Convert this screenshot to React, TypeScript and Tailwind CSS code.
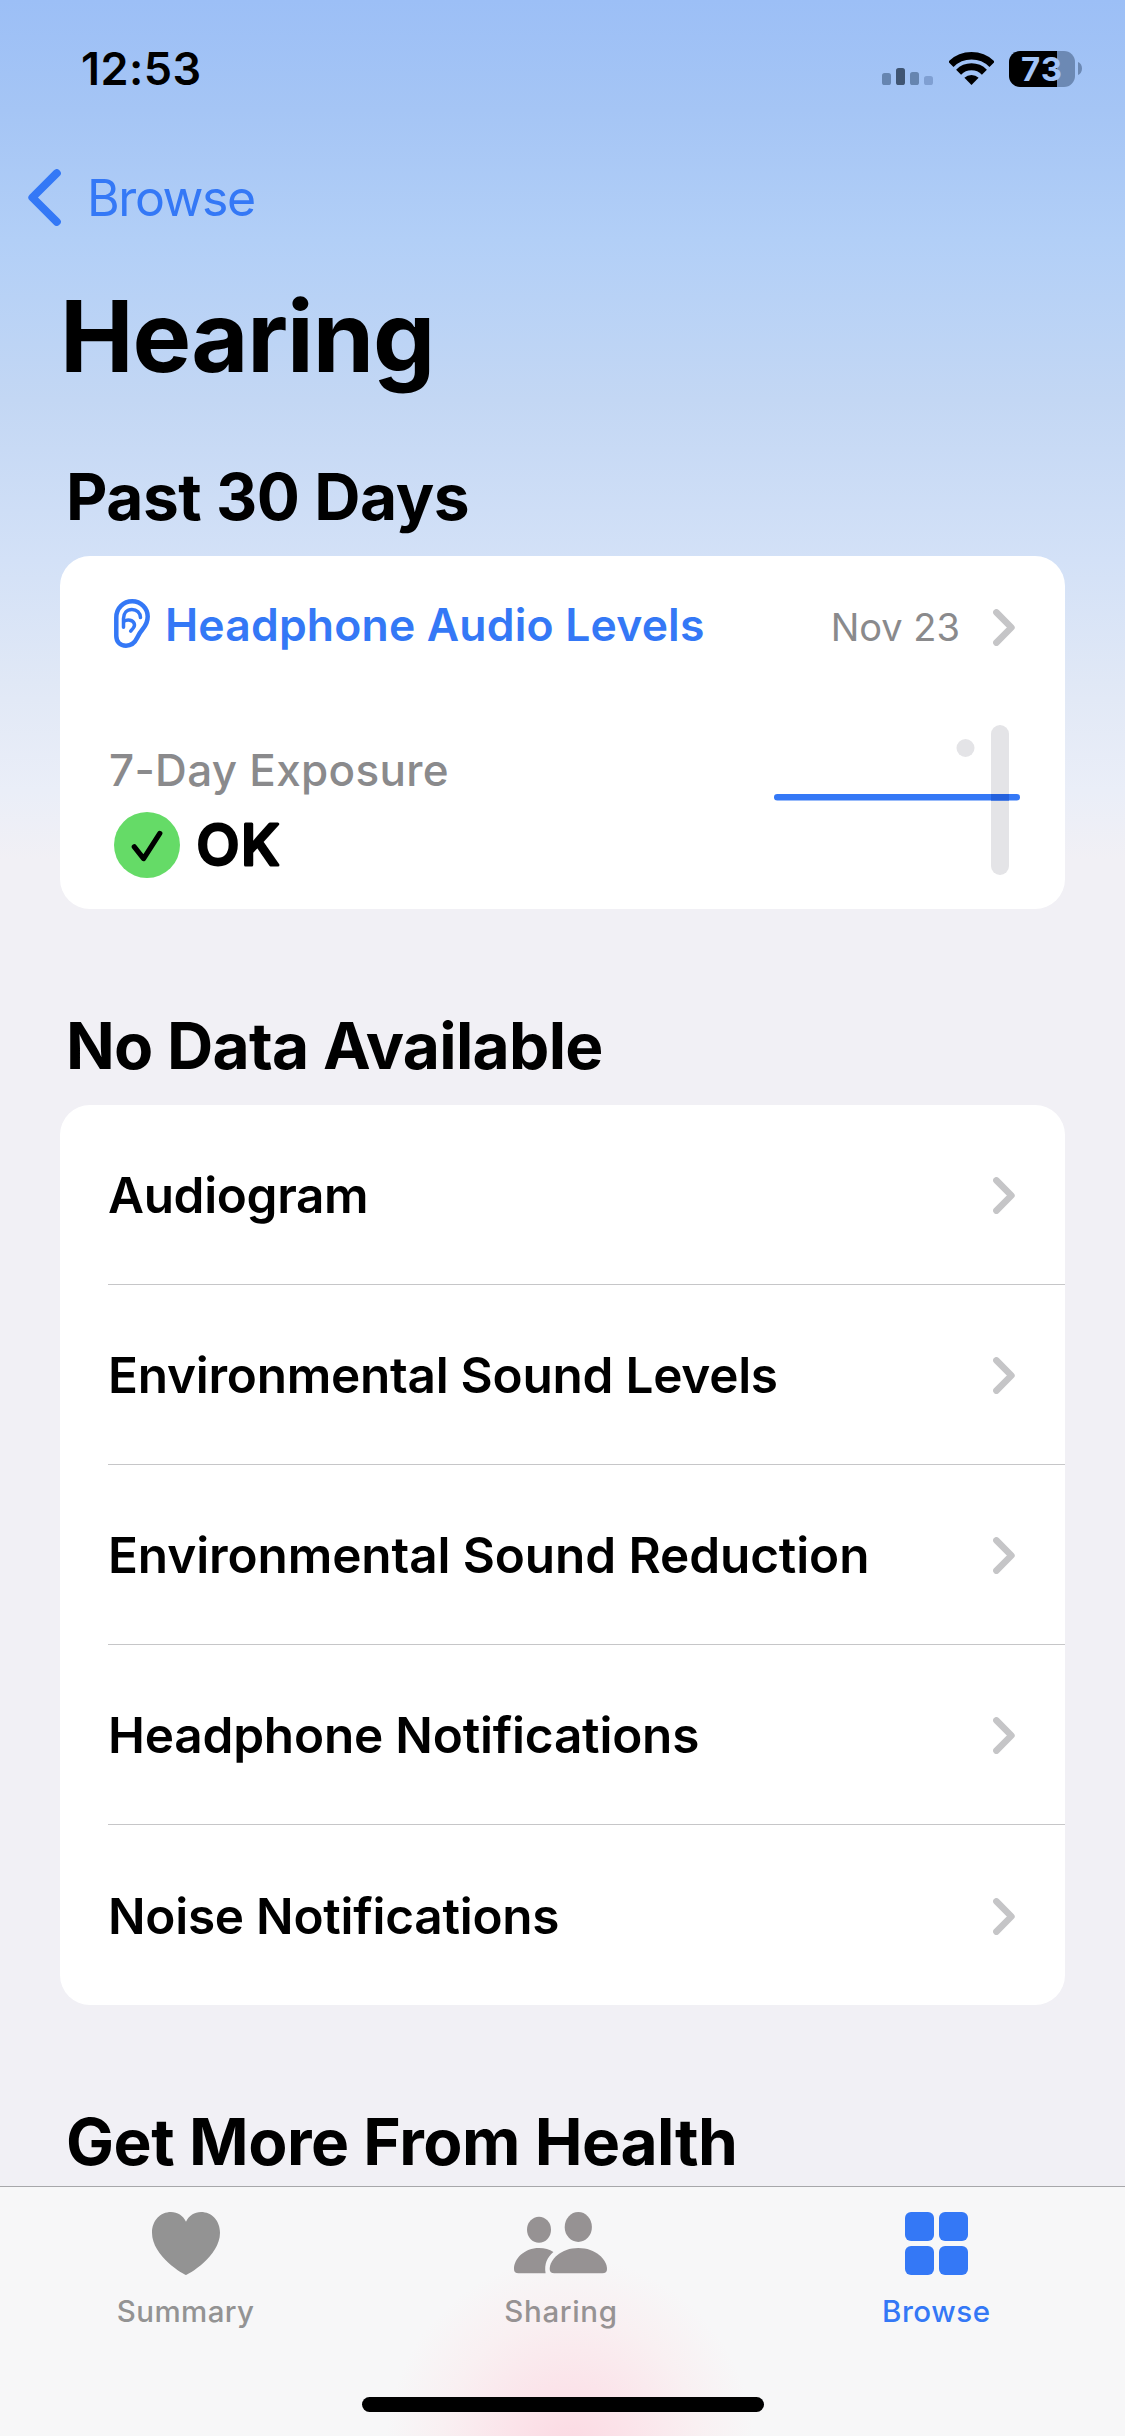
import type { ReactNode } from "react";

function SignalIcon() {
  return (
    <svg width="51" height="33" viewBox="0 0 51 33">
      <rect x="0" y="21" width="9" height="12" rx="2.6" fill="#6685b0" />
      <rect x="14" y="16" width="9" height="17" rx="2.6" fill="#3f5573" />
      <rect x="28" y="20" width="9" height="13" rx="2.6" fill="#6685b0" />
      <rect x="42" y="24" width="9" height="9" rx="2.6" fill="#7f9fd2" />
    </svg>
  );
}

function WifiIcon() {
  return (
    <svg width="45" height="33" viewBox="0 0 45 33" fill="none" stroke="#000">
      <path d="M1.9 12.3 A29.2 29.2 0 0 1 43.1 12.3" strokeWidth="7.4" />
      <path d="M9.6 20.2 A18.2 18.2 0 0 1 35.4 20.2" strokeWidth="7" />
      <path d="M15.4 25.8 A10.4 10.4 0 0 1 29.6 25.8 L22.5 33 Z" fill="#000" stroke="none" />
    </svg>
  );
}

function Battery() {
  return (
    <div className="flex items-center gap-[3px]">
      <div className="flex h-9 w-[66px] items-center justify-center rounded-[11px] bg-[linear-gradient(to_right,#000_48px,#6c89b4_48px)]">
        <span className="text-[33px] leading-[42px] font-bold tracking-[1px] text-[#a3c4f6]">73</span>
      </div>
      <svg width="4" height="13" viewBox="0 0 4 13">
        <path d="M0 0 C2.6 1 4 3.8 4 6.5 S2.6 12 0 13 Z" fill="#6c89b4" />
      </svg>
    </div>
  );
}

function Chevron() {
  return (
    <svg width="22" height="37" viewBox="0 0 22 37" fill="none">
      <path d="M3.4 3.4 L18.4 18.5 L3.4 33.6" stroke="#c5c5c7" strokeWidth="6.6" strokeLinecap="round" strokeLinejoin="round" />
    </svg>
  );
}

function EarIcon() {
  return (
    <svg className="mb-[3px]" width="36" height="49" viewBox="0 0 36 49" fill="none" stroke="#3478f6" strokeLinecap="round" strokeLinejoin="round">
      <path
        d="M2.3 18.5 C2.3 9 9.4 2.3 18.2 2.3 C27 2.3 33.7 9.2 33.7 17.6 C33.7 22.4 31.8 26.6 28.6 30.2 C25.6 33.6 24.8 35.4 22.9 39.3 C20.6 44.2 17 46.7 12 46.7 C6 46.7 2.3 42.6 2.3 37 Z"
        strokeWidth="4.5"
      />
      <path d="M9.5 28.2 V19.6 C9.5 14 13 10.4 17.9 10.4 C22.8 10.4 26.4 14 26.5 18.6" strokeWidth="3.5" />
      <path d="M9.8 22.4 C11.6 21.2 14 20.8 16 21.2 C20.4 22 21.6 26 19.3 29 L16.7 32.2" strokeWidth="3.5" />
    </svg>
  );
}

function ExposureChart() {
  return (
    <svg width="246" height="150" viewBox="0 0 246 150">
      <circle cx="191.5" cy="23" r="9" fill="#e4e4e7" />
      <rect x="217" y="0" width="18" height="150" rx="9" fill="#e4e4e7" />
      <rect x="0" y="69" width="246" height="6.6" rx="3.3" fill="#3478f6" />
      <rect x="217" y="69" width="18" height="6.6" fill="#2461dd" />
    </svg>
  );
}

function OkBadge() {
  return (
    <svg width="66" height="66" viewBox="0 0 66 66" fill="none">
      <circle cx="33" cy="33" r="33" fill="#65db67" />
      <path d="M20.3 34.8 L29.6 46.6 L45.8 21.4" stroke="#000" strokeWidth="5.2" strokeLinecap="round" strokeLinejoin="round" />
    </svg>
  );
}

function HeartIcon() {
  return (
    <svg width="68" height="64" viewBox="0 0 68 64" fill="#939393">
      <path d="M34 63 C32.4 63 0 44.5 0 20.8 C0 8.6 8.4 0 19 0 C25.6 0 31 3.6 34 9.7 C37 3.6 42.4 0 49 0 C59.6 0 68 8.6 68 20.8 C68 44.5 35.6 63 34 63 Z" />
    </svg>
  );
}

function SharingIcon() {
  return (
    <svg width="93" height="64" viewBox="0 0 93 64" fill="#969293">
      <ellipse cx="25" cy="17.8" rx="12" ry="13" />
      <ellipse cx="64.3" cy="15" rx="13.6" ry="15" />
      <path d="M0 57 C0 46.5 10.5 36 25 36 C30.8 36 35.6 37.6 39.4 40 C33.4 45 30 52 31.6 61.3 H4.5 Q0 61.3 0 57 Z" />
      <path d="M35.7 57 C35.7 47.5 47 36 64.3 36 C81.7 36 93 47.5 93 57 Q93 61.3 88.4 61.3 H40.3 Q35.7 61.3 35.7 57 Z" />
    </svg>
  );
}

function GridIcon() {
  return (
    <svg width="63" height="64" viewBox="0 0 63 64" fill="#3478f6">
      <rect x="0" y="0" width="29" height="29" rx="6" />
      <rect x="34" y="0" width="29" height="29" rx="6" />
      <rect x="0" y="34" width="29" height="29" rx="6" />
      <rect x="34" y="34" width="29" height="29" rx="6" />
    </svg>
  );
}

const rows = [
  { label: "Audiogram", tracking: "tracking-[-0.35px]" },
  { label: "Environmental Sound Levels", tracking: "tracking-[-0.25px]" },
  { label: "Environmental Sound Reduction", tracking: "tracking-[-0.1px]" },
  { label: "Headphone Notifications", tracking: "tracking-[-0.2px]" },
  { label: "Noise Notifications", tracking: "tracking-[-0.25px]" },
];

function Tab({ icon, label, className }: { icon: ReactNode; label: string; className: string }) {
  return (
    <div className="flex flex-1 flex-col items-center">
      {icon}
      <span className={`mt-[17px] text-[29.5px] leading-9 font-medium ${className}`}>{label}</span>
    </div>
  );
}

export default function App() {
  return (
    <div className="flex h-[2436px] w-[1125px] flex-col overflow-hidden bg-[#f1f0f5] font-[Inter,sans-serif] text-black">
      <div className="h-[2186px] overflow-hidden bg-[linear-gradient(to_bottom,#9cbff6_0px,#a5c5f5_110px,#b2cff7_240px,#c3d7f4_400px,#d3e1f7_560px,#e2e9f6_700px,#eaeef8_790px,#f1f0f5_860px)]">
        <header>
          <div className="flex h-[137px] items-center justify-between pr-[43px] pl-[81px]">
            <span className="text-[45px] font-semibold tracking-[0.45px]">12:53</span>
            <div className="flex items-center">
              <SignalIcon />
              <div className="ml-4">
                <WifiIcon />
              </div>
              <div className="ml-[15px]">
                <Battery />
              </div>
            </div>
          </div>
          <div className="flex h-[122px] items-center pl-7 text-[#3478f6]">
            <svg className="mb-px" width="33" height="57" viewBox="0 0 33 57" fill="none">
              <path d="M28.8 4.2 L4.4 28.5 L28.8 52.8" stroke="#3478f6" strokeWidth="8" strokeLinecap="round" strokeLinejoin="round" />
            </svg>
            <span className="ml-[26px] text-[50px] tracking-[-1.4px]">Browse</span>
          </div>
          <h1 className="pl-[60px] text-[98.6px] leading-[154px] font-bold tracking-[-1.1px]">Hearing</h1>
        </header>

        <h2 className="pt-6 pl-[66px] text-[64px] leading-[119px] font-bold tracking-[-0.45px]">Past 30 Days</h2>
        <section className="mx-[60px] h-[353px] rounded-[30px] bg-white">
          <div className="flex h-[138px] items-center pr-[50px] pl-[54px]">
            <EarIcon />
            <span className="ml-[15px] flex-1 text-[44.5px] font-semibold tracking-[0.17px] text-[#3478f6]">
              Headphone Audio Levels
            </span>
            <span className="mt-1 mr-[33px] text-[38px] text-[#8a8a8c]">Nov 23</span>
            <div className="mt-1">
              <Chevron />
            </div>
          </div>
          <div className="flex justify-between pt-[31px] pr-[45px] pl-[49px]">
            <div className="pt-[18px]">
              <div className="text-[44px] leading-[54px] font-medium tracking-[0.3px] text-[#8a8a8c]">7-Day Exposure</div>
              <div className="mt-[15px] flex items-center pl-[5px]">
                <OkBadge />
                <svg className="ml-4" width="100" height="66" viewBox="0 0 100 66">
                  <text
                    x="0.5"
                    y="53"
                    fontFamily="Inter"
                    fontSize="56"
                    fontWeight="500"
                    stroke="#000"
                    strokeWidth="3"
                    strokeLinejoin="round"
                    letterSpacing="1.5"
                  >
                    OK
                  </text>
                </svg>
              </div>
            </div>
            <ExposureChart />
          </div>
        </section>

        <h2 className="pt-[78px] pl-[66px] text-[64px] leading-[118px] font-bold tracking-[-0.7px]">No Data Available</h2>
        <section className="mx-[60px] rounded-[30px] bg-white pl-12">
          {rows.map(({ label, tracking }, i) => (
            <div
              key={label}
              className={`flex h-[180px] items-center justify-between pt-[2px] pr-[50px] ${i < rows.length - 1 ? "border-b border-[#c6c6c8]" : ""}`}
            >
              <span className={`text-[49.5px] font-semibold ${tracking}`}>{label}</span>
              <Chevron />
            </div>
          ))}
        </section>

        <h2 className="pt-[97px] pl-[66px] text-[64px] leading-[80px] font-bold tracking-[-0.45px]">Get More From Health</h2>
      </div>

      <nav className="flex h-[250px] flex-col items-center border-t border-[#a7a7aa] bg-[#f7f7f8] bg-[radial-gradient(ellipse_185px_195px_at_570px_265px,#fbd9e2_0%,#fbe4ea_35%,#f9f0f2_70%,#f7f7f8_100%)]">
        <div className="-ml-[3px] flex w-[1126px] pt-[25px]">
          <Tab icon={<HeartIcon />} label="Summary" className="tracking-[0.4px] text-[#939393]" />
          <Tab icon={<SharingIcon />} label="Sharing" className="tracking-[0.65px] text-[#969293]" />
          <Tab icon={<GridIcon />} label="Browse" className="tracking-[0.6px] text-[#3478f6]" />
        </div>
        <div className="mt-[68px] h-[15px] w-[402px] rounded-full bg-black" />
      </nav>
    </div>
  );
}
